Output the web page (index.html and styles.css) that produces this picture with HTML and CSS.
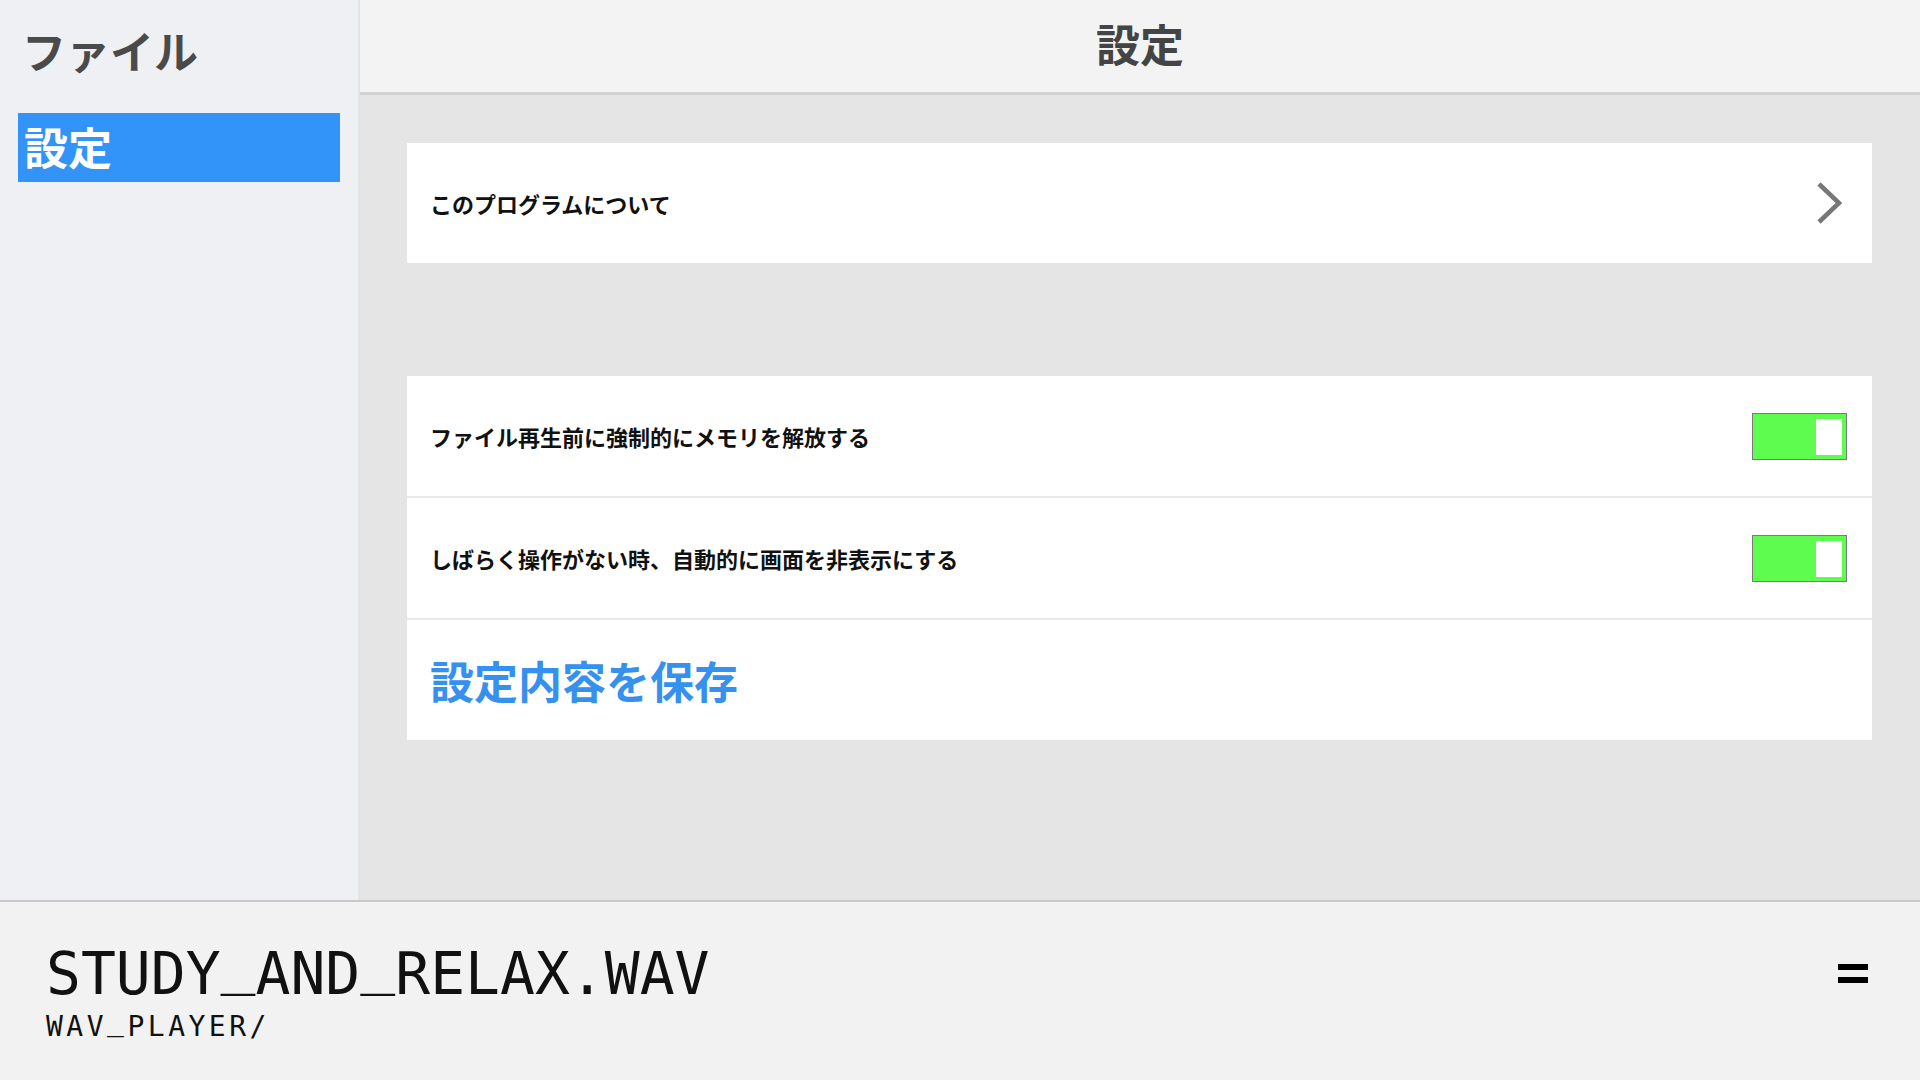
FILE: index.html
```html
<!DOCTYPE html>
<html lang="ja">
<head>
    <meta charset="UTF-8">
    <meta name="viewport" content="width=device-width, initial-scale=1.0">
    <title>設定</title>
    <link rel="stylesheet" href="styles.css">
</head>
<body>

<div class="app">
    <div class="top">
        <!-- Left menu -->
        <aside class="sidebar">
            <div class="side-title">ファイル</div>
            <div class="side-item active">設定</div>
        </aside>

        <!-- Settings page -->
        <main class="main">
            <header class="page-header">設定</header>

            <div class="content">
                <div class="card">
                    <div class="row link-row">
                        <span class="row-label">このプログラムについて</span>
                        <svg class="chevron" width="28" height="44" viewBox="0 0 28 44">
                            <polyline points="4,3 24,22 4,41" fill="none" stroke="#777" stroke-width="4.5" stroke-linejoin="miter"/>
                        </svg>
                    </div>
                </div>

                <div class="card group">
                    <div class="row">
                        <span class="row-label">ファイル再生前に強制的にメモリを解放する</span>
                        <div class="toggle on"><span class="knob"></span></div>
                    </div>
                    <div class="row">
                        <span class="row-label">しばらく操作がない時、自動的に画面を非表示にする</span>
                        <div class="toggle on"><span class="knob"></span></div>
                    </div>
                    <div class="row">
                        <span class="save-label">設定内容を保存</span>
                    </div>
                </div>
            </div>
        </main>
    </div>

    <!-- Now playing bar -->
    <footer class="player">
        <div class="track">
            <div class="track-name">STUDY<span class="us">_</span>AND<span class="us">_</span>RELAX.WAV</div>
            <div class="track-path">WAV<span class="us">_</span>PLAYER/</div>
        </div>
        <div class="menu-btn">
            <span></span>
            <span></span>
        </div>
    </footer>
</div>

</body>
</html>
```

FILE: styles.css
```css
/* Global Styles */
html, body {
    margin: 0;
    height: 100%;
}

body {
    font-family: "Noto Sans CJK JP", "Noto Sans", sans-serif;
    background: #f2f2f2;
}

.app {
    display: flex;
    flex-direction: column;
    height: 1080px;
}

.top {
    display: flex;
    height: 900px;
}

/* Sidebar */
.sidebar {
    width: 360px;
    background: #eef0f3;
    border-right: 2px solid #e2e4e7;
    padding: 18px 0 0 18px;
    box-sizing: border-box;
    flex-shrink: 0;
}

.side-title {
    font-size: 44px;
    font-weight: 700;
    color: #4a4a4a;
    line-height: 64px;
    padding-left: 4px;
    margin-bottom: 31px;
}

.side-item {
    box-sizing: border-box;
    width: 322px;
    height: 69px;
    line-height: 67px;
    padding-left: 6px;
    font-size: 44px;
    font-weight: 700;
    color: #fff;
}

.side-item.active {
    background: #3294f8;
}

/* Main area */
.main {
    flex: 1;
    display: flex;
    flex-direction: column;
    background: #e5e5e5;
}

.page-header {
    height: 92px;
    background: #f3f3f3;
    border-bottom: 3px solid #d2d2d2;
    text-align: center;
    font-size: 44px;
    font-weight: 700;
    color: #444;
    line-height: 86px;
}

.content {
    padding: 48px 48px 0 47px;
}

/* Cards */
.card {
    background: #fff;
}

.card.group {
    margin-top: 113px;
}

.row {
    height: 120px;
    display: flex;
    align-items: center;
    justify-content: space-between;
    padding: 0 25px 0 23px;
}

.group .row + .row {
    border-top: 2px solid #e8e8e8;
}

.row-label {
    font-size: 22px;
    font-weight: 700;
    color: #111;
}

.chevron {
    margin-right: 4px;
}

.save-label {
    font-size: 44px;
    font-weight: 700;
    color: #3590ee;
}

/* Toggle switch */
.toggle {
    width: 93px;
    height: 45px;
    border: 1px solid #7a7a7a;
    background: #5efc4f;
    position: relative;
}

.toggle .knob {
    position: absolute;
    right: 4px;
    top: 5px;
    width: 26px;
    height: 36px;
    background: #fff;
}

/* Player bar */
.player {
    height: 180px;
    border-top: 2px solid #c9c9c9;
    box-sizing: border-box;
    background: #f2f2f2;
    display: flex;
    align-items: center;
    justify-content: space-between;
    padding: 0 52px 0 46px;
}

.track {
    font-family: "DejaVu Sans Mono", monospace;
    color: #111;
    margin-top: 4px;
}

.track-name {
    font-size: 58px;
    line-height: 63px;
}

.track-path {
    font-size: 28px;
    line-height: 34px;
    letter-spacing: 3.5px;
    margin-top: 4px;
}

/* underscores sit on the baseline in this display */
.us {
    vertical-align: 0.2em;
    line-height: 0;
}

.menu-btn {
    display: flex;
    flex-direction: column;
    gap: 7px;
    margin-top: -36px;
}

.menu-btn span {
    display: block;
    width: 30px;
    height: 6px;
    background: #000;
}
```
